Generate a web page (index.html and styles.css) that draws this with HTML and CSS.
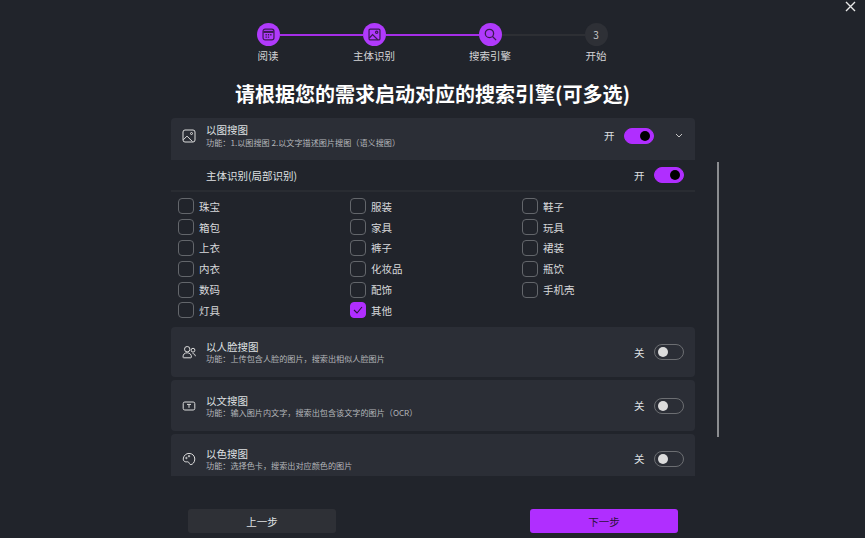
FILE: index.html
```html
<!DOCTYPE html>
<html lang="zh-CN">
<head>
<meta charset="utf-8">
<title>搜索引擎</title>
<link rel="stylesheet" href="styles.css">
</head>
<body>
<button class="close" aria-label="关闭"><svg width="11" height="11" viewBox="0 0 11 11"><path d="M1 1l9 9M10 1l-9 9" stroke="#e8e8e8" stroke-width="1.4"/></svg></button>
<div class="stepper">
  <div class="dot done"><svg width="13" height="13" viewBox="0 0 15 15" fill="none" stroke="#3b1a52" stroke-width="1.4"><rect x="1.2" y="1.2" width="12.6" height="12.6" rx="2.5"/><path d="M1.5 4.5h12" stroke-width="2.4"/><path d="M4 7.8h1.6M6.7 7.8h1.6M9.4 7.8h1.6M4 10.5h1.6M6.7 10.5h1.6" stroke-width="1.5"/></svg></div>
  <div class="line on"></div>
  <div class="dot done"><svg width="13" height="13" viewBox="0 0 15 15" fill="none" stroke="#3b1a52" stroke-width="1.4"><rect x="1.2" y="1.2" width="12.6" height="12.6" rx="1.5"/><path d="M1.5 11.5l3.800-4 6 6"/><circle cx="10" cy="5" r="1.3"/></svg></div>
  <div class="line on"></div>
  <div class="dot done"><svg width="13" height="13" viewBox="0 0 15 15" fill="none" stroke="#3b1a52" stroke-width="1.5"><circle cx="6.3" cy="6.3" r="4.8"/><path d="M9.8 9.8l4.200 4.200"/></svg></div>
  <div class="line"></div>
  <div class="dot todo">3</div>
  <div class="step-label col-1">阅读</div>
  <div class="step-label col-3">主体识别</div>
  <div class="step-label col-5">搜索引擎</div>
  <div class="step-label col-7">开始</div>
</div>
<h1 class="title">请根据您的需求启动对应的搜索引擎(可多选)</h1>
<div class="body-row">
  <div class="list">
    <section class="card card-open">
      <svg class="icon" width="14" height="14" viewBox="0 0 14 14" fill="none" stroke="#dcdcdc" stroke-width="1"><rect x="1" y="1" width="12" height="12" rx="2"/><path d="M1.3 10.8l3.700-3.700 5.400 5.400"/><circle cx="9.5" cy="4.500" r="1"/></svg>
      <div class="card-text"><div class="card-title">以图搜图</div><div class="card-desc">功能：1.以图搜图 2.以文字描述图片搜图（语义搜图）</div></div>
      <span class="state">开</span><span class="toggle on"></span>
      <svg class="chevron" width="8" height="5" viewBox="0 0 8 5" fill="none" stroke="#c4c4c4" stroke-width="1"><path d="M1 1l3 3 3-3"/></svg>
    </section>
    <div class="sub-row">
      <span class="sub-title">主体识别(局部识别)</span>
      <span class="state">开</span><span class="toggle on"></span>
    </div>
    <div class="checks">
      <label class="check"><i class="box"></i>珠宝</label>
      <label class="check"><i class="box"></i>服装</label>
      <label class="check"><i class="box"></i>鞋子</label>
      <label class="check"><i class="box"></i>箱包</label>
      <label class="check"><i class="box"></i>家具</label>
      <label class="check"><i class="box"></i>玩具</label>
      <label class="check"><i class="box"></i>上衣</label>
      <label class="check"><i class="box"></i>裤子</label>
      <label class="check"><i class="box"></i>裙装</label>
      <label class="check"><i class="box"></i>内衣</label>
      <label class="check"><i class="box"></i>化妆品</label>
      <label class="check"><i class="box"></i>瓶饮</label>
      <label class="check"><i class="box"></i>数码</label>
      <label class="check"><i class="box"></i>配饰</label>
      <label class="check"><i class="box"></i>手机壳</label>
      <label class="check"><i class="box"></i>灯具</label>
      <label class="check"><i class="box checked"><svg width="10" height="8" viewBox="0 0 10 8" fill="none" stroke="#2a1238" stroke-width="1.1"><path d="M1 4l3 3 5-6"/></svg></i>其他</label>
    </div>
    <section class="card">
      <svg class="icon" width="14" height="14" viewBox="0 0 14 14" fill="none" stroke="#dcdcdc" stroke-width="1"><circle cx="5.2" cy="4.200" r="2.700"/><path d="M1 12.200c0-3 1.600-4.400 4.200-4.400s4.200 1.400 4.200 4.400c0 .4-.3.6-.6.6H1.600c-.3 0-.6-.2-.6-.6z"/><circle cx="11" cy="5.200" r="1.900"/><path d="M10.600 8.600c1.600 0 2.700 1 2.700 2.600"/></svg>
      <div class="card-text"><div class="card-title">以人脸搜图</div><div class="card-desc">功能：上传包含人脸的图片，搜索出相似人脸图片</div></div>
      <span class="state">关</span><span class="toggle"></span>
    </section>
    <section class="card">
      <svg class="icon" width="14" height="14" viewBox="0 0 14 14" fill="none" stroke="#dcdcdc" stroke-width="1"><rect x="1.2" y="3" width="11.6" height="8" rx="1.6"/><path d="M5 5.400h4M7 5.400v3.400"/></svg>
      <div class="card-text"><div class="card-title">以文搜图</div><div class="card-desc">功能：输入图片内文字，搜索出包含该文字的图片（OCR）</div></div>
      <span class="state">关</span><span class="toggle"></span>
    </section>
    <section class="card">
      <svg class="icon" width="14" height="14" viewBox="0 0 14 14" fill="none" stroke="#dcdcdc" stroke-width="1"><path d="M7 1.400c3.400 0 5.800 2.500 5.800 5.600 0 3.200-2.200 5.600-4 5.600-1.500 0-1.300-1.600-2.200-2.400-1-.9-2.400.2-3.800-.6C1.400 8.800 1 7.600 1.400 6 2 3.300 4.200 1.400 7 1.400z"/><circle cx="4.400" cy="6" r=".7"/><circle cx="7" cy="4.200" r=".7"/></svg>
      <div class="card-text"><div class="card-title">以色搜图</div><div class="card-desc">功能：选择色卡，搜索出对应颜色的图片</div></div>
      <span class="state">关</span><span class="toggle"></span>
    </section>
  </div>
  <div class="scrollbar"></div>
</div>
<div class="footer">
  <button class="btn">上一步</button>
  <button class="btn primary">下一步</button>
</div>
</body>
</html>
```

FILE: styles.css
```css
* { box-sizing: border-box; }
html, body { margin: 0; height: 100%; }
body {
  background: #21242b;
  color: #dfe0e2;
  font-family: "Noto Sans CJK SC", "Noto Sans", sans-serif;
  width: 865px;
  height: 538px;
  overflow: hidden;
  position: relative;
}
.close {
  position: absolute;
  top: 1px;
  right: 9px;
  padding: 0;
  border: 0;
  background: none;
  line-height: 0;
}
.stepper {
  display: grid;
  grid-template-columns: 23px 83px 23px 93px 23px 83px 23px;
  grid-template-rows: 23px 20px;
  justify-content: center;
  align-items: center;
  padding-top: 23px;
  margin-left: -1px;
}
.dot {
  width: 23px;
  height: 23px;
  border-radius: 50%;
  display: flex;
  align-items: center;
  justify-content: center;
  font-size: 10px;
}
.dot.done { background: #b03afc; }
.dot.todo { background: #2e3036; color: #c8c9cb; }
.line { height: 2px; background: #2d2f34; }
.line.on { background: #a52ee8; }
.step-label {
  grid-row: 2;
  justify-self: center;
  white-space: nowrap;
  font-size: 10.5px;
  line-height: 14px;
  color: #d4d5d7;
}
.col-1 { grid-column: 1; }
.col-3 { grid-column: 3; }
.col-5 { grid-column: 5; }
.col-7 { grid-column: 7; }
.title {
  margin: 11px 0 0;
  height: 41px;
  font-size: 20px;
  line-height: 34px;
  font-weight: 700;
  text-align: center;
  color: #fff;
}
.body-row {
  display: flex;
  align-items: flex-start;
  gap: 22px;
  margin-left: 171px;
}
.list {
  width: 524px;
  height: 358px;
  overflow: hidden;
  display: flex;
  flex-direction: column;
}
.card {
  flex: none;
  display: flex;
  align-items: center;
  height: 50.4px;
  margin-bottom: 3px;
  padding: 0 11px;
  background: #2b2e36;
  border-radius: 4px;
}
.card-open {
  height: 42px;
  margin: 0;
  padding-bottom: 7px;
  border-radius: 4px 4px 0 0;
}
.icon { flex: none; margin-right: 10px; }
.card-text { flex: 1; min-width: 0; }
.card-title { font-size: 10.5px; line-height: 13px; color: #dfe0e2; }
.card-desc { font-size: 8.15px; line-height: 11px; color: #b4b6ba; }
.card-open .card-desc { margin-top: 1px; }
.state { font-size: 10.5px; color: #dfe0e2; margin-right: 9.5px; }
.toggle {
  flex: none;
  position: relative;
  width: 30px;
  height: 16px;
  border-radius: 8px;
  border: 1px solid #6c6e72;
}
.toggle::after {
  content: "";
  position: absolute;
  left: 3px;
  top: 2px;
  width: 10px;
  height: 10px;
  border-radius: 50%;
  background: #dcdcdc;
}
.toggle.on { background: #b02eff; border-color: #b02eff; }
.toggle.on::after { left: auto; right: 3px; background: #000; }
.chevron { flex: none; margin-left: 21px; margin-right: 1px; }
.sub-row {
  flex: none;
  display: flex;
  align-items: center;
  height: 32px;
  padding: 0 11px 0 35px;
  border-bottom: 2px solid #292c32;
}
.sub-title { flex: 1; font-size: 10.5px; }
.checks {
  flex: none;
  display: grid;
  grid-template-columns: repeat(3, 172px);
  grid-auto-rows: 20.8px;
  align-items: center;
  height: 135px;
  padding: 4px 0 0 7px;
}
.check {
  display: flex;
  align-items: center;
  gap: 5px;
  font-size: 10.5px;
  color: #d8d9db;
}
.box {
  width: 16px;
  height: 16px;
  border: 1px solid #63666b;
  border-radius: 4px;
  display: flex;
  align-items: center;
  justify-content: center;
}
.box.checked { background: #b02eff; border-color: #b02eff; }
.scrollbar {
  width: 2px;
  height: 275px;
  margin-top: 44px;
  background: #8b8d90;
}
.footer {
  display: flex;
  gap: 194px;
  margin: 33px 0 0 188px;
}
.btn {
  width: 148px;
  height: 24px;
  padding: 0;
  border: 0;
  border-radius: 3px;
  background: #2e3036;
  color: #dfe0e2;
  font: 10.5px "Noto Sans CJK SC", sans-serif;
}
.btn.primary { background: #b02eff; color: #2a1238; }
```
